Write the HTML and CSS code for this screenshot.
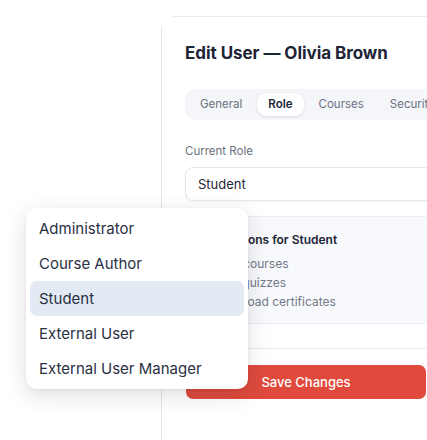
FILE: index.html
```html
<!DOCTYPE html>
<html lang="en">
<head>
    <meta charset="UTF-8">
    <meta name="viewport" content="width=device-width, initial-scale=1.0">
    <title>Edit User</title>
    <link rel="stylesheet" href="styles.css">
</head>
<body>
    <div class="top-bar"></div>

    <div class="panel">
        <h1 class="panel-title">Edit User — Olivia Brown</h1>

        <div class="tabs">
            <button class="tab">General</button>
            <button class="tab active">Role</button>
            <button class="tab">Courses</button>
            <button class="tab">Security</button>
        </div>

        <label class="field-label">Current Role</label>
        <div class="select-box">Student</div>

        <div class="perm-box">
            <div class="perm-title">Permissions for Student</div>
            <ul class="perm-list">
                <li>View courses</li>
                <li>Take quizzes</li>
                <li>Download certificates</li>
            </ul>
        </div>

        <div class="divider"></div>

        <button class="save-btn">Save Changes</button>
    </div>

    <!-- Role dropdown (open) -->
    <ul class="role-menu">
        <li>Administrator</li>
        <li>Course Author</li>
        <li class="selected">Student</li>
        <li>External User</li>
        <li>External User Manager</li>
    </ul>
</body>
</html>
```

FILE: styles.css
```css
body {
    margin: 0;
    padding: 0;
    background: #ffffff;
    font-family: Inter, "Noto Sans", sans-serif;
    color: #1e2535;
    overflow: hidden;
    height: 440px;
    position: relative;
}

.top-bar {
    height: 16px;
    margin-left: 173px;
    border-bottom: 1px solid #efebe4;
}

.panel {
    margin-left: 161px;
    margin-top: 10px;
    border-left: 1px solid #e6e6e6;
    padding: 14px 0 0 23px;
    height: 400px;
    width: 320px;
}

.panel-title {
    margin: 0;
    font-size: 17px;
    line-height: 24px;
    font-weight: 700;
    color: #1d2436;
    letter-spacing: -0.05px;
}

.tabs {
    margin-top: 24px;
    display: flex;
    gap: 4px;
    padding: 4px;
    background: #f4f6fa;
    border-radius: 10px;
    width: max-content;
}

.tab {
    border: none;
    background: none;
    font-family: inherit;
    font-size: 11.5px;
    line-height: 15px;
    padding: 4px 11px;
    color: #6b7180;
    border-radius: 9px;
    cursor: pointer;
}

.tab.active {
    background: #ffffff;
    color: #1d2436;
    font-weight: 600;
    box-shadow: 0 1px 3px rgba(20, 30, 50, 0.12);
}

.field-label {
    display: block;
    margin-top: 24px;
    font-size: 11.5px;
    line-height: 14px;
    color: #6b7180;
}

.select-box {
    margin-top: 9px;
    height: 32px;
    line-height: 32px;
    padding-left: 12px;
    border: 1px solid #e6e8ee;
    border-radius: 8px;
    font-size: 13px;
    color: #1f2636;
    box-shadow: 0 1px 2px rgba(20, 30, 50, 0.05);
}

.perm-box {
    margin-top: 15px;
    padding: 16px 12px 12px;
    background: #f8f9fc;
    border: 1px solid #eceef3;
    border-radius: 8px;
}

.perm-title {
    font-size: 12px;
    line-height: 14px;
    font-weight: 600;
    color: #1d2436;
}

.perm-list {
    margin: 7px 0 0;
    padding-left: 14px;
    font-size: 12px;
    line-height: 19px;
    color: #737987;
}

.divider {
    margin-top: 24px;
    border-top: 1px solid #eaebee;
}

.save-btn {
    display: block;
    margin-top: 16px;
    margin-left: 1px;
    width: 240px;
    height: 34px;
    border: none;
    border-radius: 7px;
    background: #df4a3c;
    color: #ffffff;
    font-family: inherit;
    font-size: 13px;
    font-weight: 500;
    cursor: pointer;
}

/* Dropdown menu floating over the form */
.role-menu {
    position: absolute;
    top: 208px;
    left: 26px;
    width: 214px;
    margin: 0;
    padding: 3px 4px;
    list-style: none;
    background: #ffffff;
    border-radius: 10px;
    box-shadow: 0 6px 22px rgba(20, 30, 50, 0.14), 0 1px 3px rgba(20, 30, 50, 0.06);
}

.role-menu li {
    height: 35px;
    line-height: 35px;
    padding-left: 9px;
    font-size: 15px;
    color: #2a3043;
    border-radius: 7px;
}

.role-menu li.selected {
    background: #e4eaf4;
}
```
